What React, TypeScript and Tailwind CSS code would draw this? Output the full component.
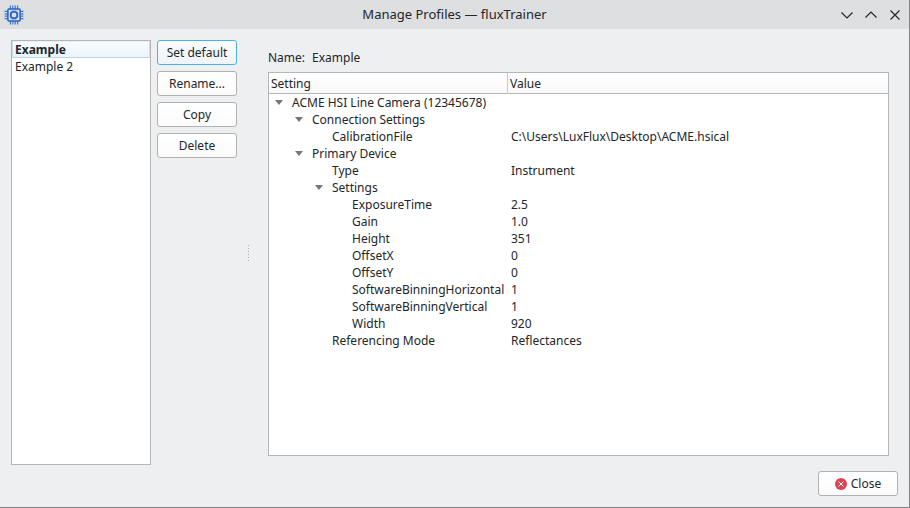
import { useState } from "react";
import type { ReactNode } from "react";

type Row = { label: string; level: 0 | 1 | 2 | 3; value?: string; group?: boolean };

const rows: Row[] = [
  { label: "ACME HSI Line Camera (12345678)", level: 0, group: true },
  { label: "Connection Settings", level: 1, group: true },
  { label: "CalibrationFile", level: 2, value: "C:\\Users\\LuxFlux\\Desktop\\ACME.hsical" },
  { label: "Primary Device", level: 1, group: true },
  { label: "Type", level: 2, value: "Instrument" },
  { label: "Settings", level: 2, group: true },
  { label: "ExposureTime", level: 3, value: "2.5" },
  { label: "Gain", level: 3, value: "1.0" },
  { label: "Height", level: 3, value: "351" },
  { label: "OffsetX", level: 3, value: "0" },
  { label: "OffsetY", level: 3, value: "0" },
  { label: "SoftwareBinningHorizontal", level: 3, value: "1" },
  { label: "SoftwareBinningVertical", level: 3, value: "1" },
  { label: "Width", level: 3, value: "920" },
  { label: "Referencing Mode", level: 2, value: "Reflectances" },
];

const indents = ["pl-0", "pl-5", "pl-10", "pl-15"];

const pins = [6.4, 8.8, 11.2, 13.6];

function ChipIcon() {
  return (
    <svg width="20" height="20" viewBox="0 0 20 20" fill="none" stroke="#2563cc" aria-hidden="true">
      {pins.map((p) => (
        <path key={p} d={`M${p} 0.600V4M${p} 16v3.400M0.600 ${p}H4M16 ${p}h3.400`} strokeWidth="1.200" opacity="0.85" />
      ))}
      <rect x="3.900" y="3.900" width="12.200" height="12.200" rx="1" strokeWidth="1.500" />
      <path d="M8.400 6.800h3.200l1.600 1.600v3.200l-1.600 1.600H8.400l-1.600-1.600V8.400z" strokeWidth="1.900" />
    </svg>
  );
}

function TitleButton({ label, path }: { label: string; path: string }) {
  return (
    <button type="button" aria-label={label} className="flex size-4 items-center justify-center">
      <svg width="16" height="16" viewBox="0 0 16 16" fill="none" stroke="#232629" strokeWidth="1.2" aria-hidden="true">
        <path d={path} />
      </svg>
    </button>
  );
}

function PushButton({ children, focused = false }: { children: ReactNode; focused?: boolean }) {
  return (
    <button
      type="button"
      className={`flex h-[25px] w-20 items-center justify-center gap-1 rounded-[3px] border bg-linear-to-b ${
        focused ? "border-[#4db2e2] from-[#fafcfe] to-[#eff4f9]" : "border-[#b0b1b2] from-white to-[#fbfbfc]"
      }`}
    >
      {children}
    </button>
  );
}

export default function App() {
  const [selected, setSelected] = useState("Example");

  return (
    <div className="flex min-h-screen flex-col border-r border-b border-[#828486] bg-[#eeeff1] font-['Noto_Sans',sans-serif] text-[12px] leading-[17px] text-[#232629]">
      <header className="grid h-[29px] grid-cols-[1fr_auto_1fr] items-center bg-[#dedfe1] px-1">
        <ChipIcon />
        <h1 className="text-[13px]">Manage Profiles — fluxTrainer</h1>
        <div className="flex gap-2 justify-self-end pr-[2px]">
          <TitleButton label="Minimize" path="M2.500 5.500 8 11l5.500-5.500" />
          <TitleButton label="Maximize" path="M2.500 10.500 8 5l5.500 5.500" />
          <TitleButton label="Close window" path="M3.500 3.500l9 9M12.500 3.500l-9 9" />
        </div>
      </header>

      <div className="flex grow flex-col gap-[6px] p-[11px]">
        <main className="flex grow">
          <ul className="w-[140px] shrink-0 border border-[#b4b6b8] bg-white" aria-label="Profiles">
            {["Example", "Example 2"].map((name) => (
              <li key={name}>
                <button
                  type="button"
                  onClick={() => setSelected(name)}
                  className={`flex h-[17px] w-full items-center border px-[2px] ${
                    selected === name
                      ? "border-x-[#c5dfe8] border-t-[#e4f0f4] border-b-[#b8d9e4] bg-linear-to-b from-[#f8fdff] to-[#e9f4f9] font-bold"
                      : "border-transparent"
                  }`}
                >
                  {name}
                </button>
              </li>
            ))}
          </ul>

          <div className="ml-[6px] flex shrink-0 flex-col gap-[6px]">
            <PushButton focused>Set default</PushButton>
            <PushButton>Rename...</PushButton>
            <PushButton>Copy</PushButton>
            <PushButton>Delete</PushButton>
          </div>

          <div
            className="flex w-[22px] shrink-0 flex-col items-center justify-center gap-[2px]"
            role="separator"
            aria-orientation="vertical"
          >
            {[0, 1, 2, 3, 4, 5].map((dot) => (
              <span key={dot} className="size-px bg-[#a9abad]" />
            ))}
          </div>

          <section className="flex min-w-0 grow flex-col gap-[6px] p-[9px]">
            <p className="flex gap-[7px]">
              <span>Name:</span>
              <span>{selected}</span>
            </p>
            <div className="grow border border-[#b4b6b8] bg-white">
              <table className="w-full table-fixed border-separate border-spacing-0 text-left whitespace-nowrap">
                <thead>
                  <tr className="h-[21px] bg-linear-to-b from-white to-[#f8f8f9]">
                    <th scope="col" className="w-[239px] border-r border-b border-r-[#c8cacb] border-b-[#b4b6b8] p-0 pl-[2px] font-normal">
                      Setting
                    </th>
                    <th scope="col" className="border-b border-[#b4b6b8] p-0 pl-[2px] font-normal">
                      Value
                    </th>
                  </tr>
                </thead>
                <tbody>
                  {rows.map((row) => (
                    <tr key={row.label} className="h-[17px]">
                      <td className="p-0">
                        <div className={`flex items-center ${indents[row.level]}`}>
                          <span className="flex w-[23px] shrink-0 pl-[6px]">
                            {row.group && (
                              <svg width="8" height="5" viewBox="0 0 8 5" aria-hidden="true">
                                <path d="M0 0h8L4 5z" fill="#747678" />
                              </svg>
                            )}
                          </span>
                          {row.label}
                        </div>
                      </td>
                      <td className="p-0 pl-[3px]">{row.value}</td>
                    </tr>
                  ))}
                </tbody>
              </table>
            </div>
          </section>
        </main>

        <footer className="flex justify-end">
          <PushButton>
            <svg width="12" height="12" viewBox="0 0 12 12" aria-hidden="true">
              <circle cx="6" cy="6" r="6" fill="#da4453" />
              <path d="M3.500 3.500l5 5M8.500 3.500l-5 5" stroke="#fff" />
            </svg>
            Close
          </PushButton>
        </footer>
      </div>
    </div>
  );
}
